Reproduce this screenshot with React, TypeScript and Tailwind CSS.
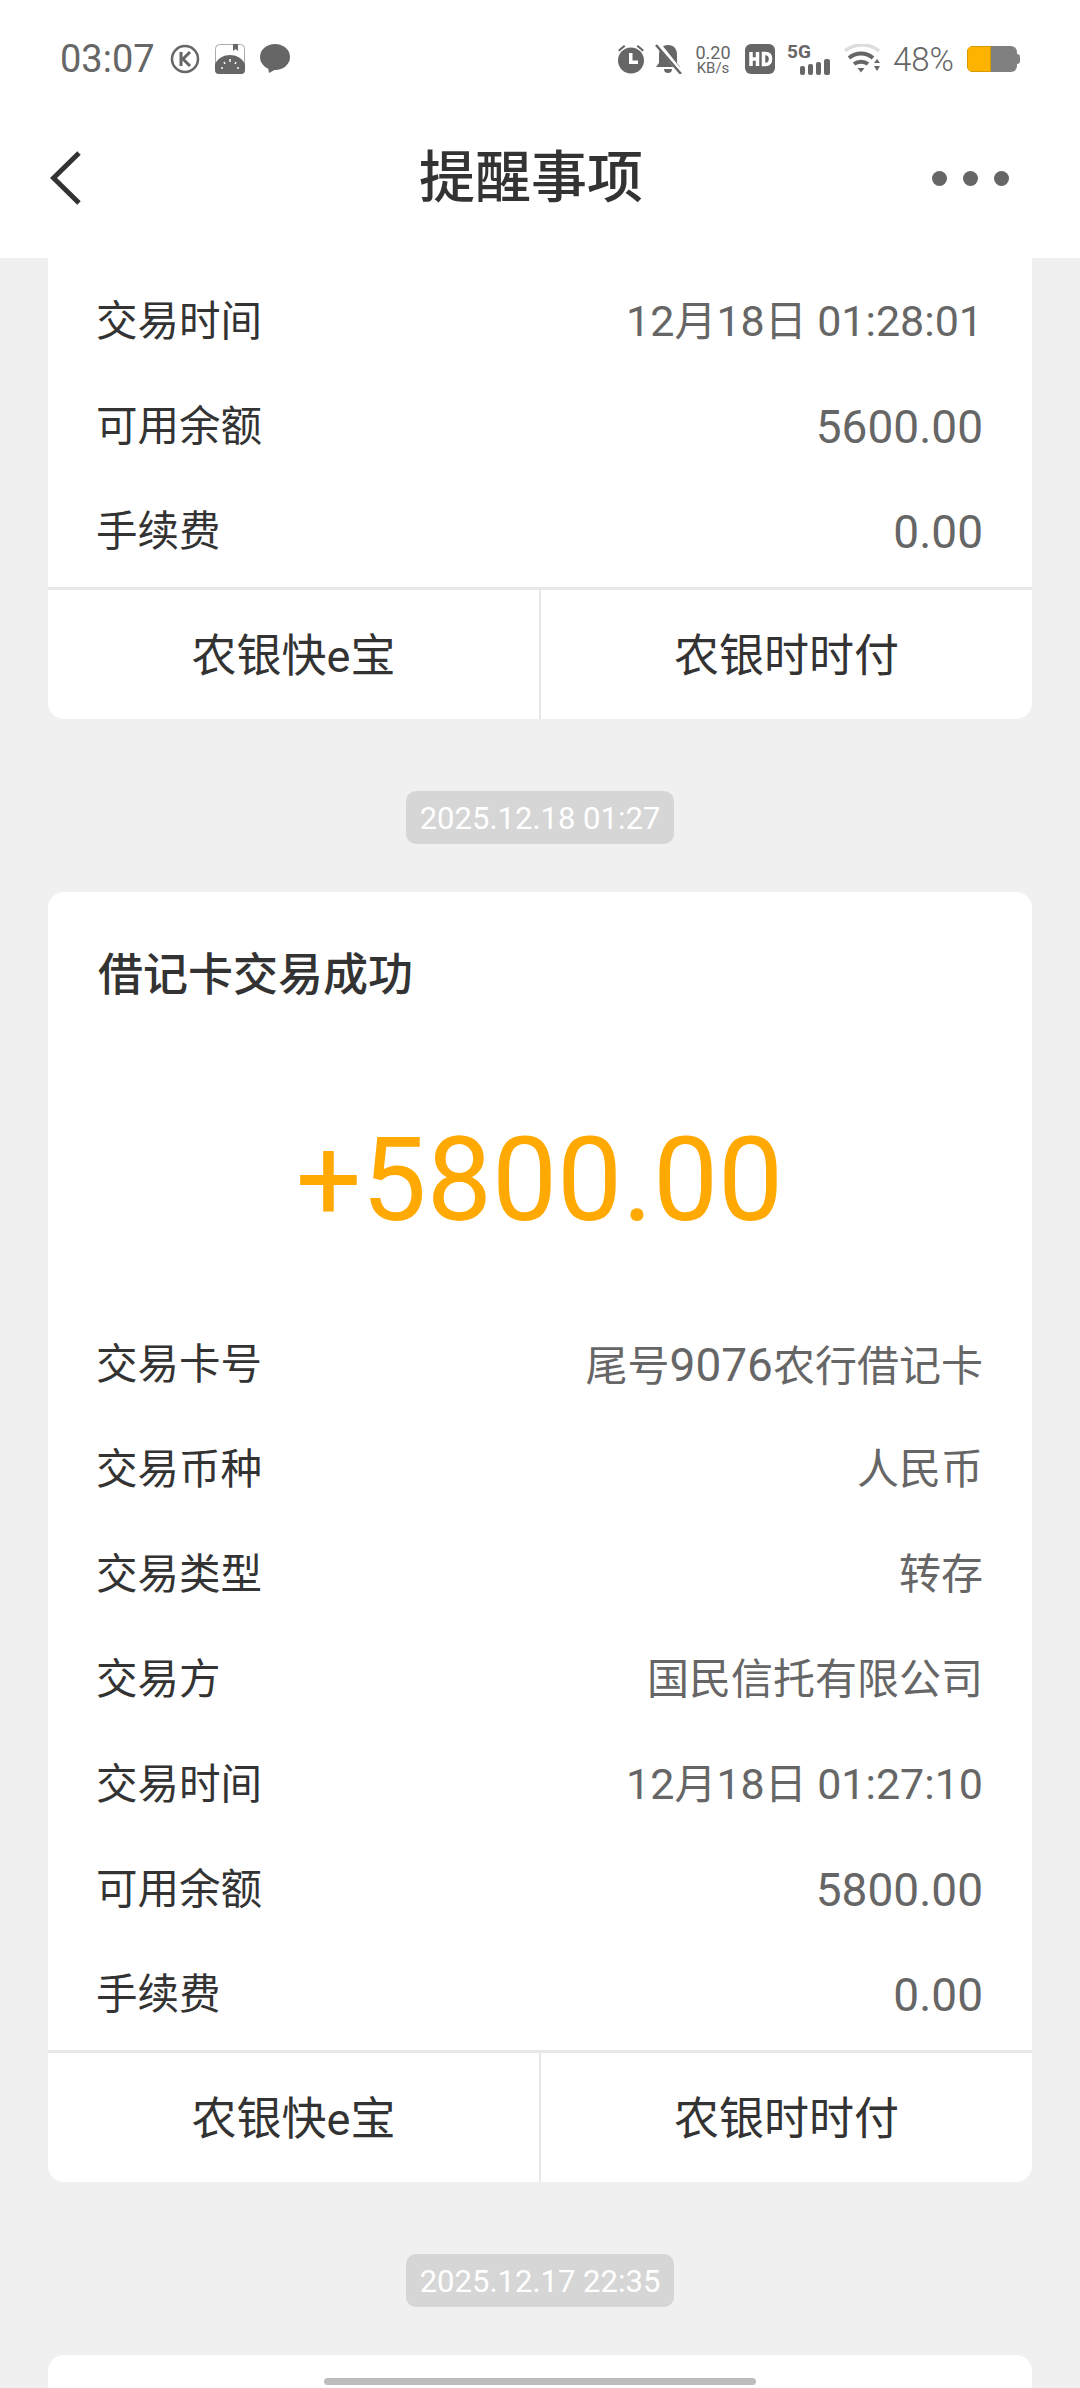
import React from "react";

const font = { fontFamily: 'Roboto, "Noto Sans CJK SC", sans-serif' };

function Mixed({ text, numClass }: { text: string; numClass: string }) {
  const parts = text.split(/([\d.:]+)/);
  return (
    <>
      {parts.map((p, i) =>
        i % 2 === 1 ? (
          <span key={i} className={numClass}>
            {p}
          </span>
        ) : (
          <span key={i}>{p}</span>
        ),
      )}
    </>
  );
}

function Row({ label, value, time }: { label: string; value: string; time?: boolean }) {
  return (
    <div className="flex h-[105px] items-center justify-between pt-[2px]">
      <span className="text-[41.5px] leading-none text-[#333333]">{label}</span>
      <span className="text-[42px] leading-none text-[#666666]">
        <Mixed text={value} numClass={time ? "text-[43px]" : "text-[46px]"} />
      </span>
    </div>
  );
}

function Actions() {
  return (
    <div className="flex h-[132px] border-t-[3px] border-[#e8e8e8] text-[45px] text-[#333333]">
      <div className="flex flex-1 items-center justify-center border-r-[2px] border-[#e8e8e8] pt-[4px]">农银快e宝</div>
      <div className="flex flex-1 items-center justify-center pt-[4px]">农银时时付</div>
    </div>
  );
}

function Stamp({ text }: { text: string }) {
  return (
    <div className="flex justify-center">
      <div className="flex h-[53px] items-center rounded-[10px] bg-[#d6d6d6] px-[14px] pt-[3px] text-[31px] text-white">
        {text}
      </div>
    </div>
  );
}

function Bar({ cls }: { cls: string }) {
  return <div className={cls} />;
}

export default function App() {
  return (
    <div className="relative flex h-[2388px] w-[1080px] flex-col overflow-hidden bg-[#f0f0f0]" style={font}>
      <header className="h-[258px] shrink-0 bg-white">
        <div className="flex h-[118px] items-center justify-between pl-[60px] pr-[60px]">
          <div className="flex items-center text-[#666666]">
            <span className="w-[94px] text-[38px] leading-none">03:07</span>
            <svg className="ml-[16px]" width="30" height="30" viewBox="0 0 30 30" fill="none" stroke="#666666">
              <circle cx="15" cy="15" r="13" strokeWidth="2.5" />
              <path d="M11 8v14M20 8l-7 7 7 7" strokeWidth="3" />
            </svg>
            <svg className="ml-[15px]" width="30" height="30" viewBox="0 0 30 30">
              <rect x="0.5" y="0.5" width="29" height="29" rx="4" fill="#fff" stroke="#aaaaaa" />
              <path d="M0 20C3 14 9 11 15 11s12 3 15 9v6a4 4 0 0 1-4 4H4a4 4 0 0 1-4-4z" fill="#666666" />
              <path d="M18 0h5v7l-2.500-2-2.500 2z" fill="#666666" />
              <path d="M15 15v3M9 18l1 2M21 18l-1 2M6 24h2M24 24h-2" stroke="#fff" strokeWidth="1.500" />
            </svg>
            <svg className="ml-[15px]" width="30" height="30" viewBox="0 0 30 30" fill="#666666">
              <ellipse cx="15" cy="13" rx="15" ry="13" />
              <path d="M8 23l1 6 9-5z" />
            </svg>
          </div>
          <div className="flex items-center text-[#666666]">
            <svg width="30" height="30" viewBox="0 0 30 30" fill="#666666">
              <circle cx="15" cy="16.500" r="13" />
              <path d="M2 6l6-5 1.400 1.600-6 5zM28 6l-6-5-1.400 1.600 6 5z" />
              <path d="M13 9h3.500v7.500H22V20h-9z" fill="#fff" />
            </svg>
            <svg className="ml-[9px]" width="27" height="30" viewBox="0 0 27 30" fill="#666666">
              <path d="M13 1c6 0 9 4 9 10v8l3 4H1l3-4v-8c0-6 3-10 9-10zM9 25h8c0 3-2 4-4 4s-4-1-4-4z" />
              <path d="M3 0l24 30" stroke="#fff" strokeWidth="5" />
              <path d="M1 1l25 29" stroke="#666666" strokeWidth="2.500" />
            </svg>
            <div className="ml-[12px] flex w-[38px] flex-col items-center">
              <span className="text-[18px] leading-[17px]">0.20</span>
              <span className="text-[15px] leading-[14px]">KB/s</span>
            </div>
            <svg className="ml-[13px]" width="30" height="30" viewBox="0 0 30 30">
              <rect width="30" height="30" rx="6" fill="#666666" />
              <path d="M6 8v14M6 15h6M12.500 8v14" stroke="#fff" strokeWidth="3.500" fill="none" />
              <path d="M18.500 9.500h2c3.500 0 5 2 5 5.500s-1.500 5.500-5 5.500h-2z" stroke="#fff" strokeWidth="3.500" fill="none" />
            </svg>
            <div className="ml-[12px] flex w-[44px] flex-col">
              <span className="text-[19px] font-bold leading-[15px]">5G</span>
              <div className="flex items-end justify-end gap-[3px] pr-[1px]">
                <Bar cls="h-[9px] w-[5px] rounded-[2px] bg-[#666666]" />
                <Bar cls="h-[11px] w-[5px] rounded-[2px] bg-[#666666]" />
                <Bar cls="h-[13px] w-[5px] rounded-[2px] bg-[#666666]" />
                <Bar cls="h-[16px] w-[6px] rounded-[2px] bg-[#666666]" />
              </div>
            </div>
            <svg className="ml-[13px]" width="36" height="30" viewBox="0 0 36 30" fill="none">
              <path d="M1 7C10-1 26-1 35 7" stroke="#dddddd" strokeWidth="3.500" />
              <path d="M5 14c7-6 17-6 24 0" stroke="#666666" strokeWidth="4" />
              <path d="M10 20c4-3 10-3 14 0" stroke="#666666" strokeWidth="4" />
              <path d="M13.500 24h7l-3.500 4.500z" fill="#666666" />
              <path d="M30 19h6l-3-4zM30 22h6l-3 5z" fill="#666666" />
            </svg>
            <span className="ml-[13px] w-[61px] text-[33px] font-light leading-none">48%</span>
            <div className="ml-[13px] flex h-[26px] w-[50px] overflow-hidden rounded-[6px] bg-[#808080]">
              <div className="h-full w-[24px] border border-[#d89a00] bg-[#fdb300]" />
            </div>
            <div className="h-[10px] w-[3px] rounded-r-[3px] bg-[#808080]" />
          </div>
        </div>
        <div className="flex h-[120px] items-center justify-between pl-[50px] pr-[71px]">
          <svg className="mr-[49px]" width="31" height="54" viewBox="0 0 31 54" fill="none">
            <path d="M29 2L3.500 27 29 52" stroke="#333333" strokeWidth="5" />
          </svg>
          <h1 className="text-[56px] font-medium leading-none text-[#333333]">提醒事项</h1>
          <div className="flex gap-[16px]">
            <div className="h-[15px] w-[15px] rounded-full bg-[#666666]" />
            <div className="h-[15px] w-[15px] rounded-full bg-[#666666]" />
            <div className="h-[15px] w-[15px] rounded-full bg-[#666666]" />
          </div>
        </div>
      </header>

      <main className="mx-[48px] flex flex-col">
        <section className="overflow-hidden rounded-b-[16px] bg-white">
          <div className="pb-[4px] pl-[48px] pr-[49px] pt-[10px]">
            <Row label="交易时间" value="12月18日 01:28:01" time />
            <Row label="可用余额" value="5600.00" />
            <Row label="手续费" value="0.00" />
          </div>
          <Actions />
        </section>

        <div className="mt-[72px]">
          <Stamp text="2025.12.18 01:27" />
        </div>

        <section className="mt-[48px] overflow-hidden rounded-[16px] bg-white">
          <div className="pb-[4px] pl-[48px] pr-[49px]">
            <h2 className="pl-[2px] pt-[56px] text-[45px] font-medium leading-[56px] text-[#333333]">借记卡交易成功</h2>
            <div className="flex h-[307px] items-center justify-center pt-[44px] text-[116px] leading-none text-[#ffa902]">
              +5800.00
            </div>
            <Row label="交易卡号" value="尾号9076农行借记卡" />
            <Row label="交易币种" value="人民币" />
            <Row label="交易类型" value="转存" />
            <Row label="交易方" value="国民信托有限公司" />
            <Row label="交易时间" value="12月18日 01:27:10" time />
            <Row label="可用余额" value="5800.00" />
            <Row label="手续费" value="0.00" />
          </div>
          <Actions />
        </section>

        <div className="mt-[72px]">
          <Stamp text="2025.12.17 22:35" />
        </div>

        <section className="mt-[48px] h-[80px] shrink-0 rounded-t-[16px] bg-white" />
      </main>

      <div className="pointer-events-none absolute left-[324px] top-[2378px] h-[7px] w-[432px] rounded-full bg-[#bdbdbd]" />
    </div>
  );
}
